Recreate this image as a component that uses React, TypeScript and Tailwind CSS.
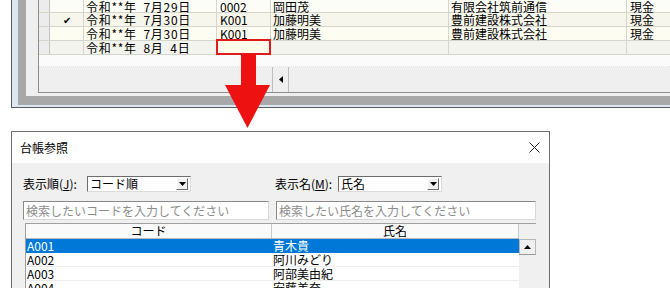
import React from "react";

const FONT = { fontFamily: '"MS UI Gothic", "Noto Sans CJK JP", sans-serif' };

const topRows = [
  { check: false, date: "令和**年  7月29日", code: "0002", name: "岡田茂", company: "有限会社筑前通信", pay: "現金", bg: "bg-[#fdfdf7]" },
  { check: true, date: "令和**年  7月30日", code: "K001", name: "加藤明美", company: "豊前建設株式会社", pay: "現金", bg: "bg-[#f6f6ec]" },
  { check: false, date: "令和**年  7月30日", code: "K001", name: "加藤明美", company: "豊前建設株式会社", pay: "現金", bg: "bg-[#fdfdf2]" },
  { check: false, date: "令和**年  8月  4日", code: "", name: "", company: "", pay: "", bg: "bg-[#f4f4ee]", mark: true },
];

const ledger = [
  { code: "A001", name: "青木貴", selected: true },
  { code: "A002", name: "阿川みどり" },
  { code: "A003", name: "阿部美由紀" },
  { code: "A004", name: "安藤美奈" },
];

const Combo = ({ value, width }: { value: string; width: string }) => (
  <div className={`${width} h-[16px] bg-white border border-t-[#6d6d6d] border-l-[#6d6d6d] border-r-[#dcdcdc] border-b-[#dcdcdc] flex items-center justify-between pl-[2px] pr-[2px]`}>
    <span className="text-[12px] leading-none text-black">{value}</span>
    <span className="w-[12px] h-[12px] bg-[#f0f0f0] border border-t-white border-l-white border-r-[#6d6d6d] border-b-[#6d6d6d] flex items-center justify-center">
      <svg width="7" height="4" viewBox="0 0 7 4">
        <path d="M0 0 H7 L3.5 4 Z" fill="#000" />
      </svg>
    </span>
  </div>
);

const SearchBox = ({ placeholder, width }: { placeholder: string; width: string }) => (
  <div className={`${width} h-[19px] bg-white border border-t-[#8a8a8a] border-l-[#8a8a8a] border-r-[#d8d8d8] border-b-[#d8d8d8] flex items-center pl-[2px]`}>
    <span className="text-[12px] leading-none text-[#8c8c8c]">{placeholder}</span>
  </div>
);

export default function App() {
  return (
    <div className="w-[670px] h-[288px] bg-white relative overflow-hidden" style={FONT}>
      {/* upper window */}
      <div className="ml-[11px] h-[108px] border-l border-b border-[#5a5a5a] bg-[#dde7f1] pl-[6px] pb-[2px] flex">
        <div className="flex-1 bg-[#a8a8a8] pl-[8px] pb-[9px] flex">
          <div className="flex-1 bg-[#efefef] pl-[12px] pb-[3px] flex">
            <div className="flex-1 border-l border-b border-[#8d8d8d] bg-white flex flex-col">
              {topRows.map((r, i) => (
                <div key={i} className={`flex border-b border-[#d5d5cc] text-[12px] leading-[13px] text-black ${i === 0 ? "h-[13px]" : "h-[14px]"} ${r.bg}`}>
                  <div className="w-[11px] bg-[#ececec] border-r border-[#c4c4c4]" />
                  <div className="w-[34px] border-r border-[#d5d5cc] flex items-center justify-center text-[10px]">
                    {r.check ? "✔" : ""}
                  </div>
                  <div className="w-[133px] border-r border-[#d5d5cc] pl-[2px] whitespace-pre tracking-[0.7px]">{r.date}</div>
                  <div className="w-[54px] border-r border-[#d5d5cc] pl-[3px] relative">
                    {r.code}
                    {r.mark && (
                      <div className="absolute left-[-1px] top-[-2px] w-[55px] h-[16px] border-2 border-[#e11b1b] bg-[#fffbea]" />
                    )}
                  </div>
                  <div className="w-[178px] border-r border-[#d5d5cc] pl-[2px]">{r.name}</div>
                  <div className="w-[178px] border-r border-[#d5d5cc] pl-[2px]">{r.company}</div>
                  <div className="flex-1 pl-[3px]">{r.pay}</div>
                </div>
              ))}
              <div className="h-[12px] border-b border-dotted border-[#e2e2e2] bg-[#fbfbfb]" />
              <div className="flex-1 bg-[#efefef] flex">
                <div className="w-[233px]" />
                <div className="w-[17px] border-l border-r border-[#bdbdbd] flex items-center justify-center">
                  <svg width="4" height="7" viewBox="0 0 4 7">
                    <path d="M4 0 V7 L0 3.5 Z" fill="#000" />
                  </svg>
                </div>
              </div>
            </div>
          </div>
        </div>
      </div>

      {/* arrow annotation */}
      <svg className="absolute left-[222px] top-[54px]" width="50" height="76" viewBox="0 0 50 76">
        <rect x="19" y="0" width="15" height="32" fill="#ee1111" />
        <path d="M3 31 H48 L25.5 74 Z" fill="#ee1111" />
      </svg>

      {/* dialog */}
      <div className="absolute left-[11px] top-[131px] w-[539px] h-[170px] border border-[#6e6e6e] bg-[#f0f0f0] flex flex-col">
        <div className="h-[31px] bg-white flex items-center justify-between pl-[8px] pr-[9px]">
          <span className="text-[12px] text-black">台帳参照</span>
          <svg width="11" height="11" viewBox="0 0 11 11">
            <path d="M0.5 0.5 L10.5 10.5 M10.5 0.5 L0.5 10.5" stroke="#222" strokeWidth="1" />
          </svg>
        </div>
        <div className="flex flex-col pl-[11px] pt-[13px]">
          <div className="flex items-center h-[16px]">
            <span className="w-[64px] text-[12px] text-black">
              表示順(<span className="underline">J</span>):
            </span>
            <Combo value="コード順" width="w-[104px]" />
            <span className="ml-[84px] w-[63px] text-[12px] text-black">
              表示名(<span className="underline">M</span>):
            </span>
            <Combo value="氏名" width="w-[104px]" />
          </div>
          <div className="flex gap-[7px] mt-[9px]">
            <SearchBox placeholder="検索したいコードを入力してください" width="w-[246px]" />
            <SearchBox placeholder="検索したい氏名を入力してください" width="w-[260px]" />
          </div>
          <div className="flex mt-[3px] ml-[2px] w-[511px]">
            <div className="w-[494px] border-l border-t border-[#a0a0a0] bg-white flex flex-col">
              <div className="flex h-[15px] bg-[#fafafa] border-b border-[#b8b8b8] text-[12px] leading-[14px] text-black">
                <div className="w-[246px] border-r border-[#c8c8c8] text-center">コード</div>
                <div className="flex-1 border-r border-[#c8c8c8] text-center">氏名</div>
              </div>
              {ledger.map((row) => (
                <div
                  key={row.code}
                  className={`flex h-[14px] border-b text-[12px] leading-[13px] ${row.selected ? "bg-[#0078d7] text-white border-[#0078d7]" : "bg-white text-black border-[#ececec]"}`}
                >
                  <div className="w-[246px] pl-[1px]">{row.code}</div>
                  <div className="flex-1 pl-[1px]">{row.name}</div>
                </div>
              ))}
            </div>
            <div className="w-[17px] flex flex-col bg-[#f0f0f0] border-t border-[#a0a0a0]">
              <div className="h-[15px]" />
              <div className="h-[16px] bg-[#f0f0f0] border border-[#b5b5b5] border-b-[#9a9a9a] flex items-center justify-center">
                <svg width="7" height="4" viewBox="0 0 7 4">
                  <path d="M0 4 H7 L3.5 0 Z" fill="#000" />
                </svg>
              </div>
            </div>
          </div>
        </div>
      </div>
    </div>
  );
}
